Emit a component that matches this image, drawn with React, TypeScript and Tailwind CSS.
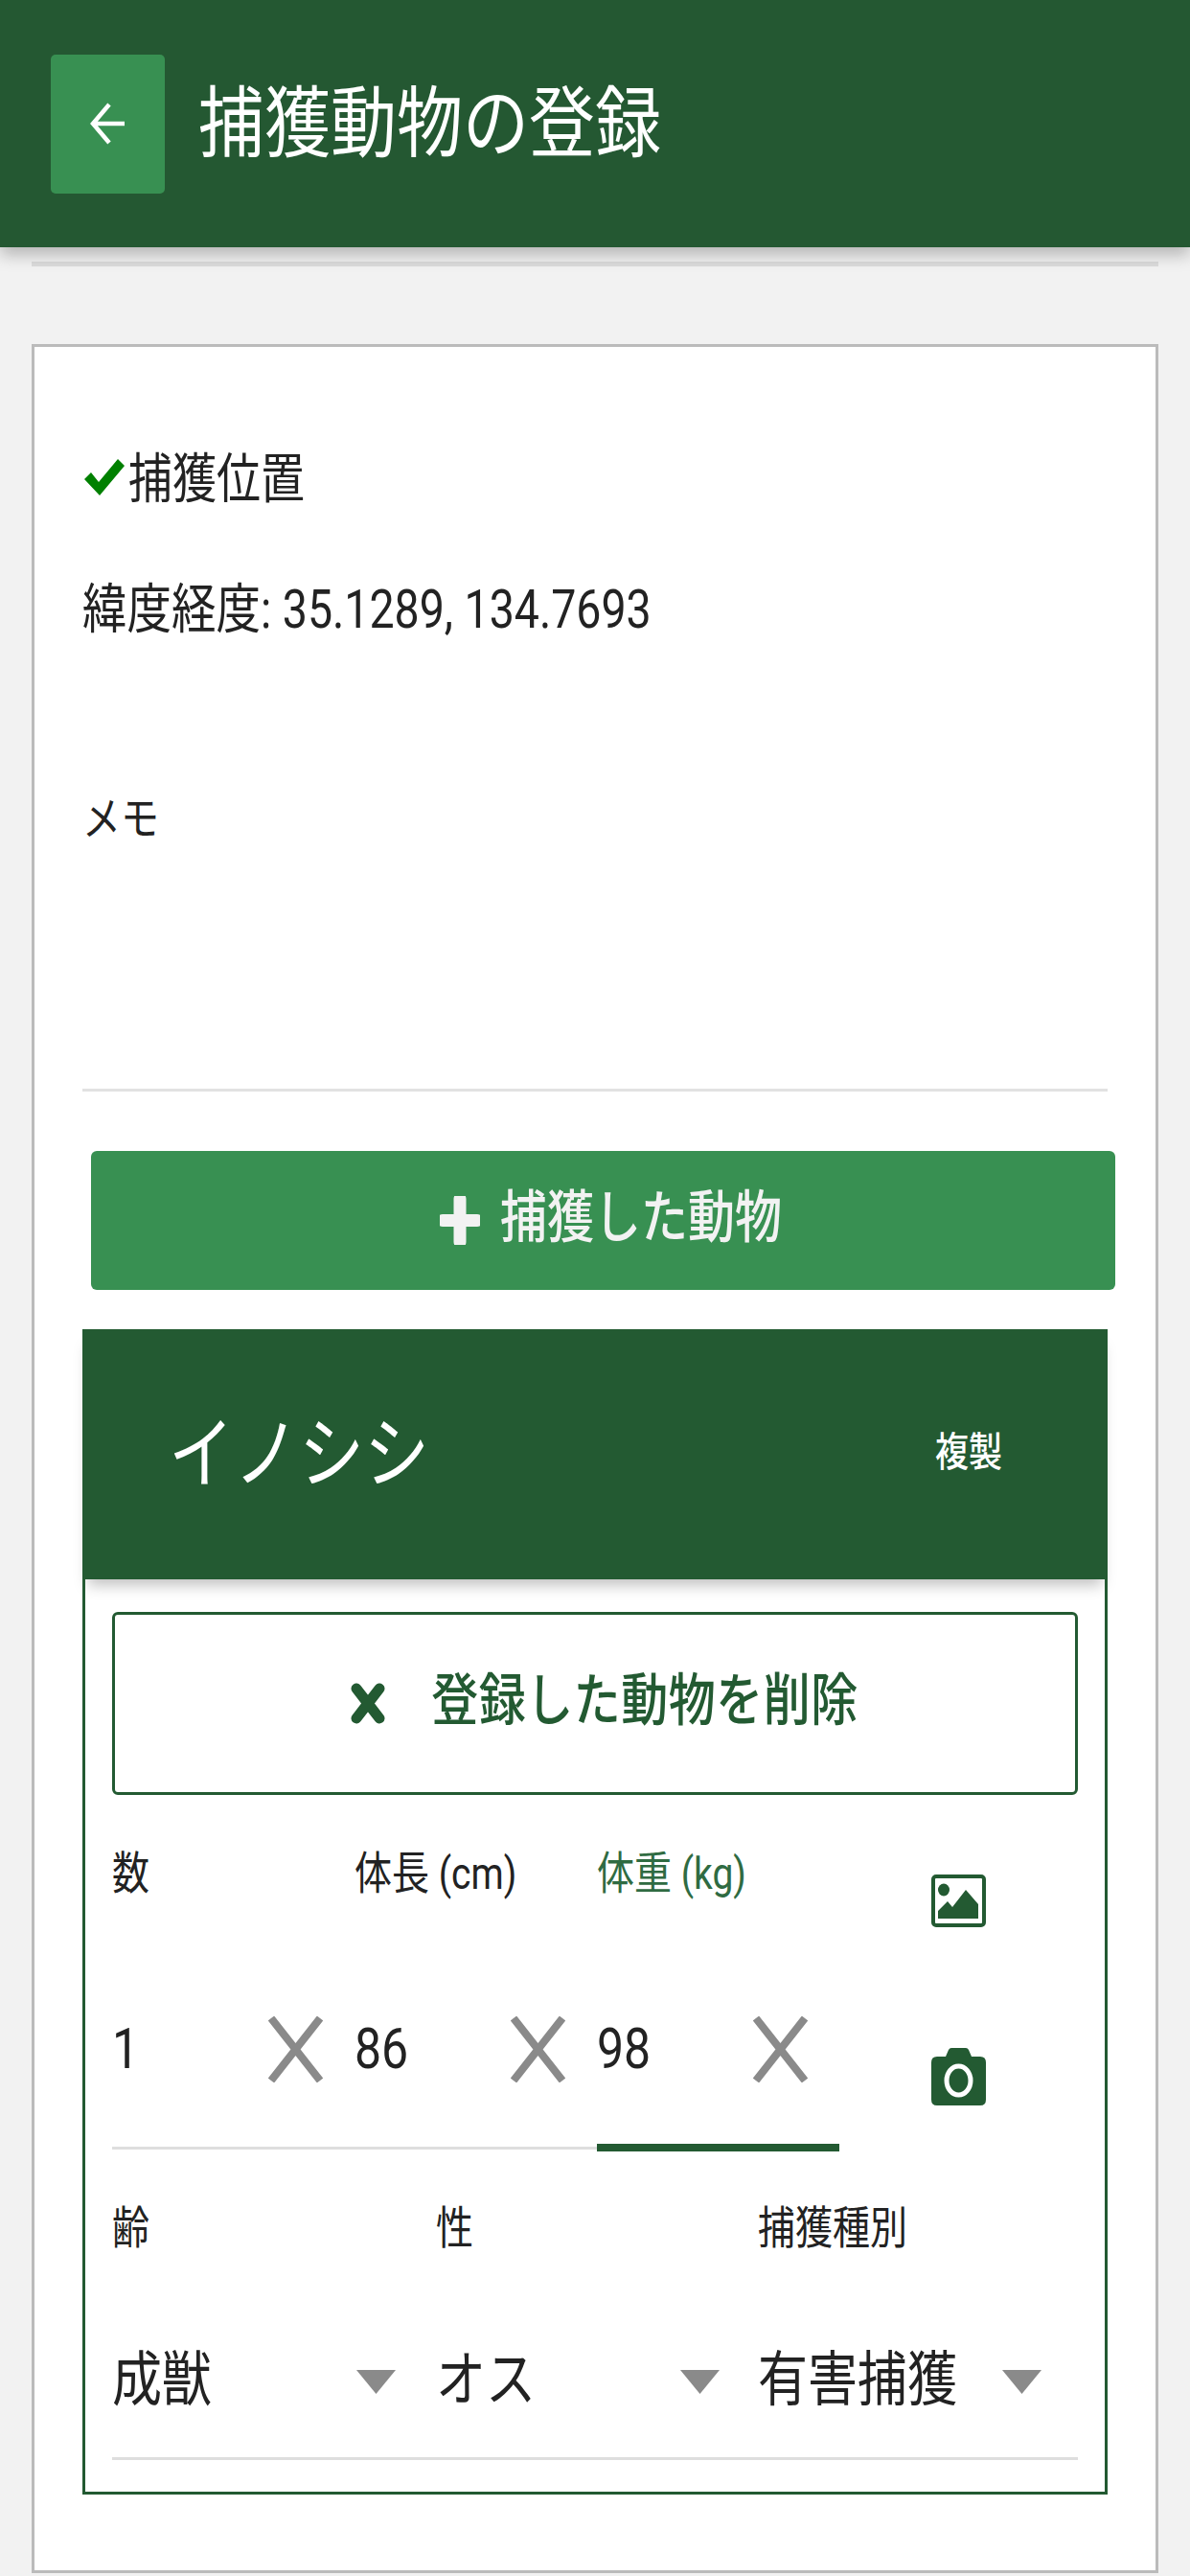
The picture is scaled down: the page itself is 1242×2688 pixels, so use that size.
const GREEN = "#235a32";

function Field({ label, value, active }: { label: string; value: string; active?: boolean }) {
  return (
    <div className="w-[253px]">
      <div className={`flex h-[60px] items-center text-[39px] ${active ? "text-[#2f6b42]" : "text-[#222]"}`}>
        <span className="inline-block scale-y-[1.2]">{label}</span>
      </div>
      <div className="mt-[113px] flex h-[80px] items-center justify-between pr-[33px]">
        <span className="inline-block scale-y-[1.2] text-[50px] leading-none text-[#222]">{value}</span>
        <svg width="57" height="69" viewBox="0 0 57 69">
          <path d="M3 2 L54 67 M54 2 L3 67" stroke="#8a8a8a" strokeWidth="8" fill="none" />
        </svg>
      </div>
      <div className="mt-[59px] flex h-[8px] items-center">
        <div className={active ? "h-[8px] w-full bg-[#235a32]" : "h-[3px] w-full bg-[#dedede]"} />
      </div>
    </div>
  );
}

function SelectField({ label, value, width }: { label: string; value: string; width: string }) {
  return (
    <div className={width}>
      <div className="flex h-[60px] items-center text-[39px] text-[#222]">
        <span className="inline-block scale-y-[1.2]">{label}</span>
      </div>
      <div className="mt-[88px] flex h-[80px] w-[296px] items-center justify-between">
        <span className="mt-[4px] inline-block scale-y-[1.2] text-[52px] leading-none text-[#222]">{value}</span>
        <svg width="41" height="25" viewBox="0 0 41 25" className="mt-[4px]">
          <path d="M0 0 H41 L20.5 25 Z" fill="#8a8a8a" />
        </svg>
      </div>
    </div>
  );
}

export default function App() {
  return (
    <div
      className="h-[2688px] w-[1242px] overflow-hidden bg-[#f2f2f2]"
      style={{ fontFamily: 'Roboto, "Noto Sans CJK JP", sans-serif' }}
    >
      <header className="relative z-10 flex h-[258px] items-center gap-[35px] bg-[#245832] pl-[53px] shadow-[0_8px_16px_rgba(0,0,0,0.25)]">
        <button className="flex h-[145px] w-[119px] items-center justify-center rounded-[5px] bg-[#389052]">
          <svg width="38" height="44" viewBox="0 0 38 44">
            <path d="M36 22 H3 M20 2 L3 22 L20 42" stroke="#fff" strokeWidth="4.5" fill="none" />
          </svg>
        </button>
        <h1 className="scale-y-[1.17] text-[69px] font-normal leading-none text-white">捕獲動物の登録</h1>
      </header>
      <div className="mx-[33px] mt-[15px] h-[5px] bg-[#dcdcdc]" />

      <main className="mx-[33px] mt-[81px] h-[2326px] border-[3px] border-[#bbbbbb] bg-white px-[50px] pt-[106px]">
        <div className="flex h-[60px] items-center text-[46px] text-[#222]">
          <svg width="42" height="38" viewBox="0 0 42 38" className="ml-[2px] mr-[4px] shrink-0">
            <path d="M0 21 L7 14 L15 24 L35 0 L42 7 L16 38 Z" fill="#008000" />
          </svg>
          <span className="mt-[4px] inline-block scale-y-[1.2]">捕獲位置</span>
        </div>
        <div className="mt-[79px] flex h-[60px] items-center text-[46.5px] text-[#222]">
          <span className="inline-block scale-y-[1.2]">緯度経度: 35.1289, 134.7693</span>
        </div>
        <div className="mt-[158px] flex h-[60px] items-center text-[40px] text-[#222]">
          <span className="inline-block scale-y-[1.2]">メモ</span>
        </div>
        <div className="mt-[251px] h-[3px] bg-[#e2e2e2]" />

        <button className="ml-[9px] mt-[62px] flex h-[145px] w-[1069px] items-center justify-center gap-[21px] rounded-[6px] bg-[#389052] pl-[16px]">
          <svg width="42" height="51" viewBox="0 0 42 51">
            <path d="M21 3 V48 M3 25.5 H39" stroke="#f2f2f2" strokeWidth="13" strokeLinecap="round" fill="none" />
          </svg>
          <span className="-mt-[4px] inline-block scale-y-[1.2] text-[49px] font-medium text-[#f2f2f2]">捕獲した動物</span>
        </button>

        <section className="mt-[41px] flex h-[1216px] flex-col">
          <div className="flex h-[261px] items-center justify-between bg-[#235a32] pl-[90px] pr-[110px] shadow-[0_12px_14px_-6px_rgba(0,0,0,0.25)]">
            <span className="inline-block scale-y-[1.2] text-[68px] text-white">イノシシ</span>
            <span className="inline-block scale-y-[1.2] text-[35px] font-medium text-white">複製</span>
          </div>
          <div className="flex-1 border-x-[3px] border-b-[3px] border-[#235a32] px-[28px] pt-[34px]">
            <button
              className="flex h-[191px] w-full items-center justify-center gap-[48px] rounded-[6px] border-[3px] bg-white pl-[20px]"
              style={{ borderColor: GREEN }}
            >
              <svg width="36" height="43" viewBox="0 0 36 43">
                <path d="M6 6 L30 37 M30 6 L6 37" stroke="#235a32" strokeWidth="11" strokeLinecap="round" fill="none" />
              </svg>
              <span className="-mt-[4px] inline-block scale-y-[1.2] text-[49px] font-medium tracking-[0.5px] text-[#235a32]">登録した動物を削除</span>
            </button>

            <div className="mt-[52px] flex">
              <Field label="数" value="1" />
              <Field label="体長 (cm)" value="86" />
              <Field label="体重 (kg)" value="98" active />
              <div className="ml-[96px] mt-[31px] flex flex-col gap-[126px]">
                <svg width="57" height="55" viewBox="0 0 57 55">
                  <rect x="2" y="2" width="53" height="51" rx="3" fill="none" stroke="#235a32" strokeWidth="4" />
                  <ellipse cx="13" cy="16" rx="6" ry="6.5" fill="#235a32" />
                  <path d="M7 46 V38 L17 28 L22 34 L36 16 L49 31 V46 Z" fill="#235a32" />
                </svg>
                <svg width="57" height="60" viewBox="0 0 57 60">
                  <path
                    d="M6 9 H15 L18 2 Q19 0 21 0 H36 Q38 0 39 2 L42 9 H51 Q57 9 57 15 V54 Q57 60 51 60 H6 Q0 60 0 54 V15 Q0 9 6 9 Z"
                    fill="#235a32"
                  />
                  <ellipse cx="28.5" cy="34" rx="12.5" ry="15" fill="none" stroke="#fff" strokeWidth="5" />
                </svg>
              </div>
            </div>

            <div className="mt-[50px] flex">
              <SelectField label="齢" value="成獣" width="w-[338px]" />
              <SelectField label="性" value="オス" width="w-[336px]" />
              <SelectField label="捕獲種別" value="有害捕獲" width="w-[334px]" />
            </div>
            <div className="mt-[41px] h-[3px] bg-[#dedede]" />
          </div>
        </section>
      </main>
    </div>
  );
}
